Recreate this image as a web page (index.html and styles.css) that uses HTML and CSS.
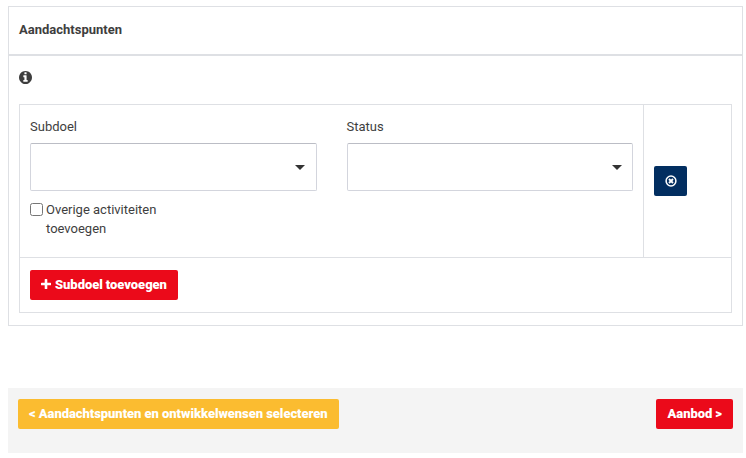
FILE: index.html
```html
<!DOCTYPE html>
<html lang="nl">
<head>
<meta charset="utf-8">
<title>Aandachtspunten</title>
<link rel="stylesheet" href="styles.css">
</head>
<body>
<section class="panel">
  <h2 class="panel-title">Aandachtspunten</h2>
  <div class="panel-body">
    <svg class="info" viewBox="0 0 1536 1536"><path fill="currentColor" d="M1024 1248v-160q0-14-9-23t-23-9h-96V544q0-14-9-23t-23-9H544q-14 0-23 9t-9 23v160q0 14 9 23t23 9h96v320h-96q-14 0-23 9t-9 23v160q0 14 9 23t23 9h448q14 0 23-9t9-23zM896 352V192q0-14-9-23t-23-9H672q-14 0-23 9t-9 23v160q0 14 9 23t23 9h192q14 0 23-9t9-23zM1536 768q0 209-103 385.500T1153.500 1433 768 1536t-385.500-103T103 1153.500 0 768t103-385.500T382.500 103 768 0t385.500 103T1433 382.500 1536 768z"/></svg>
    <div class="goals">
      <div class="goal-row">
        <div class="fields">
          <div class="field">
            <span class="label">Subdoel</span>
            <div class="select"><span class="caret"></span></div>
            <label class="check"><input type="checkbox"><span>Overige activiteiten toevoegen</span></label>
          </div>
          <div class="field">
            <span class="label">Status</span>
            <div class="select"><span class="caret"></span></div>
          </div>
        </div>
        <div class="actions">
          <button class="btn btn-navy" aria-label="Verwijderen"><svg class="remove" viewBox="0 0 12 12" fill="none" stroke="currentColor"><circle cx="6" cy="6" r="4.900" stroke-width="1.500"/><path d="M4 4l4 4M8 4l-4 4" stroke-width="1.900"/></svg></button>
        </div>
      </div>
      <div class="goal-add">
        <button class="btn btn-red"><svg class="plus" viewBox="0 0 10 10"><path fill="currentColor" d="M4.300 0h1.400q.6 0 .6.600v3.100h3.100q.6 0 .6.600v1.400q0 .6-.6.600H6.300v3.100q0 .6-.6.600H4.300q-.6 0-.6-.6V6.300H.6Q0 6.300 0 5.700V4.300q0-.6.600-.6h3.100V.6q0-.6.600-.6z"/></svg>Subdoel toevoegen</button>
      </div>
    </div>
  </div>
</section>
<footer class="footer">
  <button class="btn btn-yellow">&lt; Aandachtspunten en ontwikkelwensen selecteren</button>
  <button class="btn btn-red">Aanbod &gt;</button>
</footer>
</body>
</html>
```
FILE: styles.css
```css
* { box-sizing: border-box; }
body {
  margin: 0;
  padding: 6px 3px 0 8px;
  background: #fff;
  color: #3e3e3e;
  font: 13px/19px Roboto, sans-serif;
}
.panel { height: 320px; border: 1px solid #dee0e4; }
.panel-title {
  margin: 0;
  height: 49px;
  padding: 13px 10px 0;
  border-bottom: 2px solid #dee0e4;
  font-size: 13px;
  line-height: 19px;
  font-weight: 700;
}
.panel-body { padding: 15px 10px 0; }
.info { display: block; width: 13px; height: 13px; margin-bottom: 20px; }
.goals { border: 1px solid #dee0e4; height: 209px; }
.goal-row { display: flex; height: 153px; border-bottom: 1px solid #dee0e4; }
.fields {
  display: grid;
  grid-template-columns: 1fr 1fr;
  gap: 30px;
  width: 624px;
  padding: 12px 10px 0;
  border-right: 1px solid #dee0e4;
}
.label { display: block; margin-bottom: 7px; }
.select {
  display: flex;
  align-items: center;
  justify-content: flex-end;
  height: 48px;
  padding-right: 11px;
  border: 1px solid #d3d5dd;
  border-top-color: #bbbdc5;
  border-radius: 2px;
}
.field + .field .select { padding-right: 10px; }
.caret {
  border: 5px solid transparent;
  border-top-color: #333;
  border-bottom: 0;
}
.check { display: flex; width: 150px; margin-top: 9px; }
.check input { flex: none; width: 13px; height: 13px; margin: 3px 3px 0 0; }
.actions { display: flex; align-items: center; padding-left: 10px; }
.goal-add { padding: 12px 10px; }
.btn {
  display: flex;
  align-items: center;
  height: 30px;
  padding: 0 11px 2px;
  border: 0;
  border-radius: 2px;
  color: #fff;
  font: 900 13px/19px Roboto, sans-serif;
  letter-spacing: -.055px;
  white-space: nowrap;
}
.btn-red { background: #eb0a1a; }
.btn-navy { background: #022e60; width: 33px; padding-bottom: 1px; }
.btn-yellow { background: #fbbc30; }
.remove { width: 12px; height: 12px; flex: none; }
.plus { width: 10px; height: 10px; margin-right: 4px; }
.footer {
  display: flex;
  justify-content: space-between;
  align-items: flex-start;
  height: 65px;
  margin-top: 62px;
  padding: 11px 10px;
  background: #f4f4f4;
}
```
